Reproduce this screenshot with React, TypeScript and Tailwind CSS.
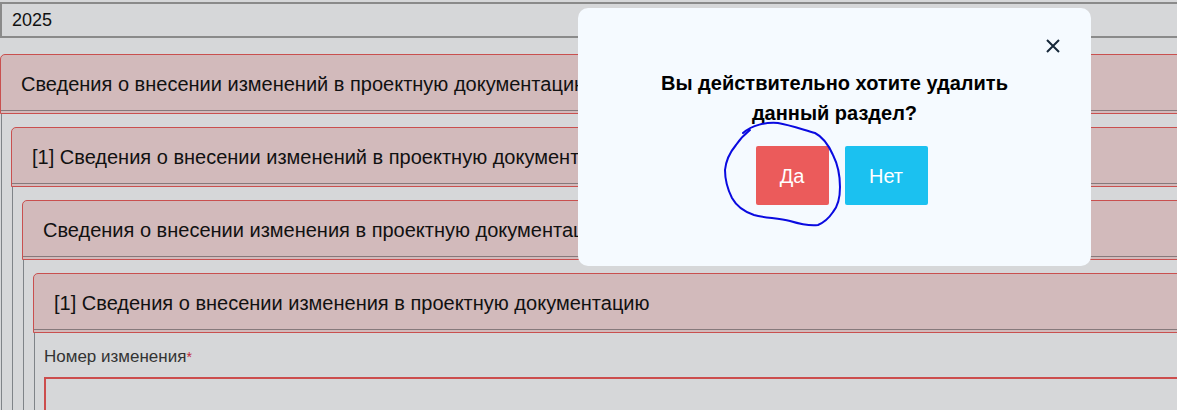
import React from "react";

const font = { fontFamily: '"Liberation Sans", Arial, sans-serif' };

function Section({ title, children }: { title: string; children?: React.ReactNode }) {
  return (
    <div>
      <div className="h-[60px] flex items-center pl-[20px] border border-[#c9504f] rounded-tl-[5px] bg-[#d2babb] shadow-[inset_0_-2px_0_#d2babb,inset_0_-3px_0_#85797b] text-[20px] text-[#111] whitespace-nowrap">
        {title}
      </div>
      <div className="ml-[1px] border-l border-[#7f8388] pl-[9px] pt-[13px]">{children}</div>
    </div>
  );
}

function Ellipse() {
  return (
    <svg className="absolute inset-0 pointer-events-none" width="1177" height="410" viewBox="0 0 1177 410">
      <path
        d="M743 133 C752 125 766 122 778 123 C790 125 804 130 815 133 C823 137 829 146 833 155 C838 165 840 176 840 187 C840 198 838 206 833 212 C829 218 825 222 818 225 C810 226 800 224 790 221 C778 218 764 218 754 215 C745 212 737 207 732 198 C727 188 725 180 725 170 C726 160 731 151 736 145 C740 139 745 134 750 130"
        fill="none"
        stroke="#0a0ae0"
        strokeWidth="2"
        strokeLinecap="round"
      />
    </svg>
  );
}

export default function App() {
  return (
    <div className="relative w-full h-[410px] overflow-hidden bg-[#d6d7d9]" style={font}>
      <div className="w-[1400px] pt-[2px]">
        {/* year field */}
        <div className="h-[36px] border-2 border-[#8a8a8a] flex items-center pl-[10px] text-[18px] text-[#111]">2025</div>

        <div className="mt-[16px]">
          <Section title="Сведения о внесении изменений в проектную документацию">
            <Section title="[1] Сведения о внесении изменений в проектную документацию">
              <Section title="Сведения о внесении изменения в проектную документацию">
                <Section title="[1] Сведения о внесении изменения в проектную документацию">
                  <div className="text-[17px] leading-[22px] text-[#333]">
                    Номер изменения<span className="text-[#c0283a] text-[14px] align-top">*</span>
                  </div>
                  <div className="mt-[9px] h-[60px] border-2 border-[#cc4d4d]" />
                </Section>
              </Section>
            </Section>
          </Section>
        </div>
      </div>

      {/* confirm dialog */}
      <div className="absolute left-[578px] top-[8px] w-[513px] h-[258px] rounded-[10px] bg-[#f5faff] pt-[60px]">
        <button className="absolute left-[467px] top-[30px] w-[16px] h-[16px] flex items-center justify-center">
          <svg width="14" height="14" viewBox="0 0 14 14">
            <path d="M1 1 L13 13 M13 1 L1 13" stroke="#16283a" strokeWidth="2" />
          </svg>
        </button>
        <div className="text-center text-[20px] font-bold leading-[30px] text-black">
          Вы действительно хотите удалить
          <br />
          данный раздел?
        </div>
        <div className="mt-[18px] flex justify-center gap-4 pl-[14px]">
          <button className="w-[73px] h-[59px] rounded-[2px] bg-[#eb5b5b] text-white text-[20px]">Да</button>
          <button className="w-[83px] h-[59px] rounded-[2px] bg-[#1bc1f0] text-white text-[20px]">Нет</button>
        </div>
      </div>

      <Ellipse />
    </div>
  );
}
